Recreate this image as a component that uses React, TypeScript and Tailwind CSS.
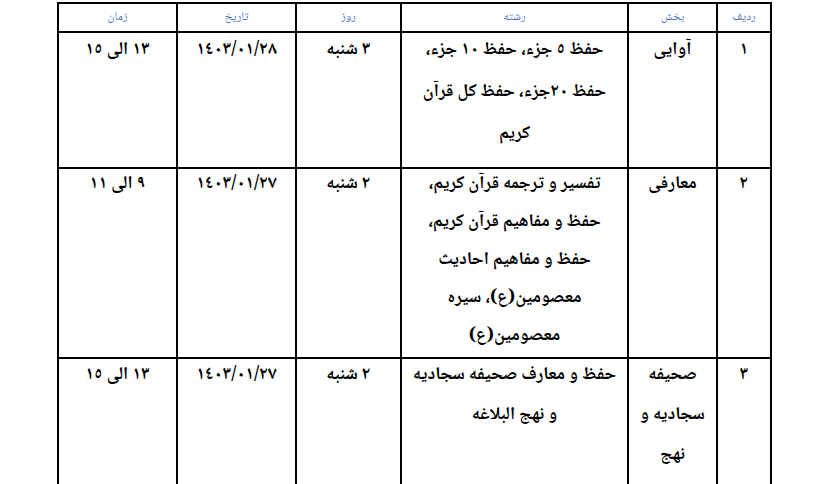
const fontStack = "font-['Noto_Naskh_Arabic','Noto_Sans_Arabic','DejaVu_Sans',serif]";

type Row = {
  num: string;
  section: string[];
  field: string[];
  day: string;
  date: string;
  time: string;
  height: string;
  leading: string;
};

const rows: Row[] = [
  {
    num: '١',
    section: ['آوایی'],
    field: ['حفظ ٥ جزء، حفظ ١٠ جزء،', 'حفظ ٢٠جزء، حفظ کل قرآن', 'کریم'],
    day: '٣ شنبه',
    date: '١٤٠٣/٠١/٢٨',
    time: '١٣ الی ١٥',
    height: 'h-[136px]',
    leading: 'leading-[42px]',
  },
  {
    num: '٢',
    section: ['معارفی'],
    field: [
      'تفسیر و ترجمه قرآن کریم،',
      'حفظ و مفاهیم قرآن کریم،',
      'حفظ و مفاهیم احادیث',
      'معصومین(ع)، سیره',
      'معصومین(ع)',
    ],
    day: '٢ شنبه',
    date: '١٤٠٣/٠١/٢٧',
    time: '٩ الی ١١',
    height: 'h-[190px]',
    leading: 'leading-[38px]',
  },
  {
    num: '٣',
    section: ['صحیفه', 'سجادیه و', 'نهج', 'البلاغه'],
    field: ['حفظ و معارف صحیفه سجادیه', 'و نهج البلاغه'],
    day: '٢ شنبه',
    date: '١٤٠٣/٠١/٢٧',
    time: '١٣ الی ١٥',
    height: 'h-[200px]',
    leading: 'leading-[40px]',
  },
];

const headers = ['ردیف', 'بخش', 'رشته', 'روز', 'تاریخ', 'زمان'];

function Lines({ lines }: { lines: string[] }) {
  return (
    <>
      {lines.map((l, i) => (
        <div key={i} className="whitespace-nowrap">{l}</div>
      ))}
    </>
  );
}

export default function App() {
  return (
    <div className="w-[823px] h-[484px] bg-white overflow-hidden">
      <div className="ml-[57px] mt-[2px]">
        <table dir="rtl" className={`table-fixed border-collapse w-[715px] ${fontStack}`}>
          <colgroup>
            <col className="w-[54px]" />
            <col className="w-[89px]" />
            <col className="w-[227px]" />
            <col className="w-[105px]" />
            <col className="w-[119px]" />
            <col className="w-[119px]" />
          </colgroup>
          <thead>
            <tr>
              {headers.map((h) => (
                <th key={h} className="h-[29px] border-2 border-black p-0 text-center align-middle text-[12px] font-normal text-[#4a74c8]">
                  {h}
                </th>
              ))}
            </tr>
          </thead>
          <tbody>
            {rows.map((r) => {
              const cell = `${r.height} ${r.leading} border-2 border-black p-0 text-center align-top text-[18px] font-bold text-black`;
              return (
                <tr key={r.num}>
                  <td className={cell}><div className="-mt-[4px]">{r.num}</div></td>
                  <td className={cell}><div className="-mt-[4px]"><Lines lines={r.section} /></div></td>
                  <td className={cell}><div className="-mt-[4px]"><Lines lines={r.field} /></div></td>
                  <td className={cell}><div className="-mt-[4px]">{r.day}</div></td>
                  <td className={cell}><div className="-mt-[4px]">{r.date}</div></td>
                  <td className={cell}><div className="-mt-[4px]">{r.time}</div></td>
                </tr>
              );
            })}
          </tbody>
        </table>
      </div>
    </div>
  );
}
